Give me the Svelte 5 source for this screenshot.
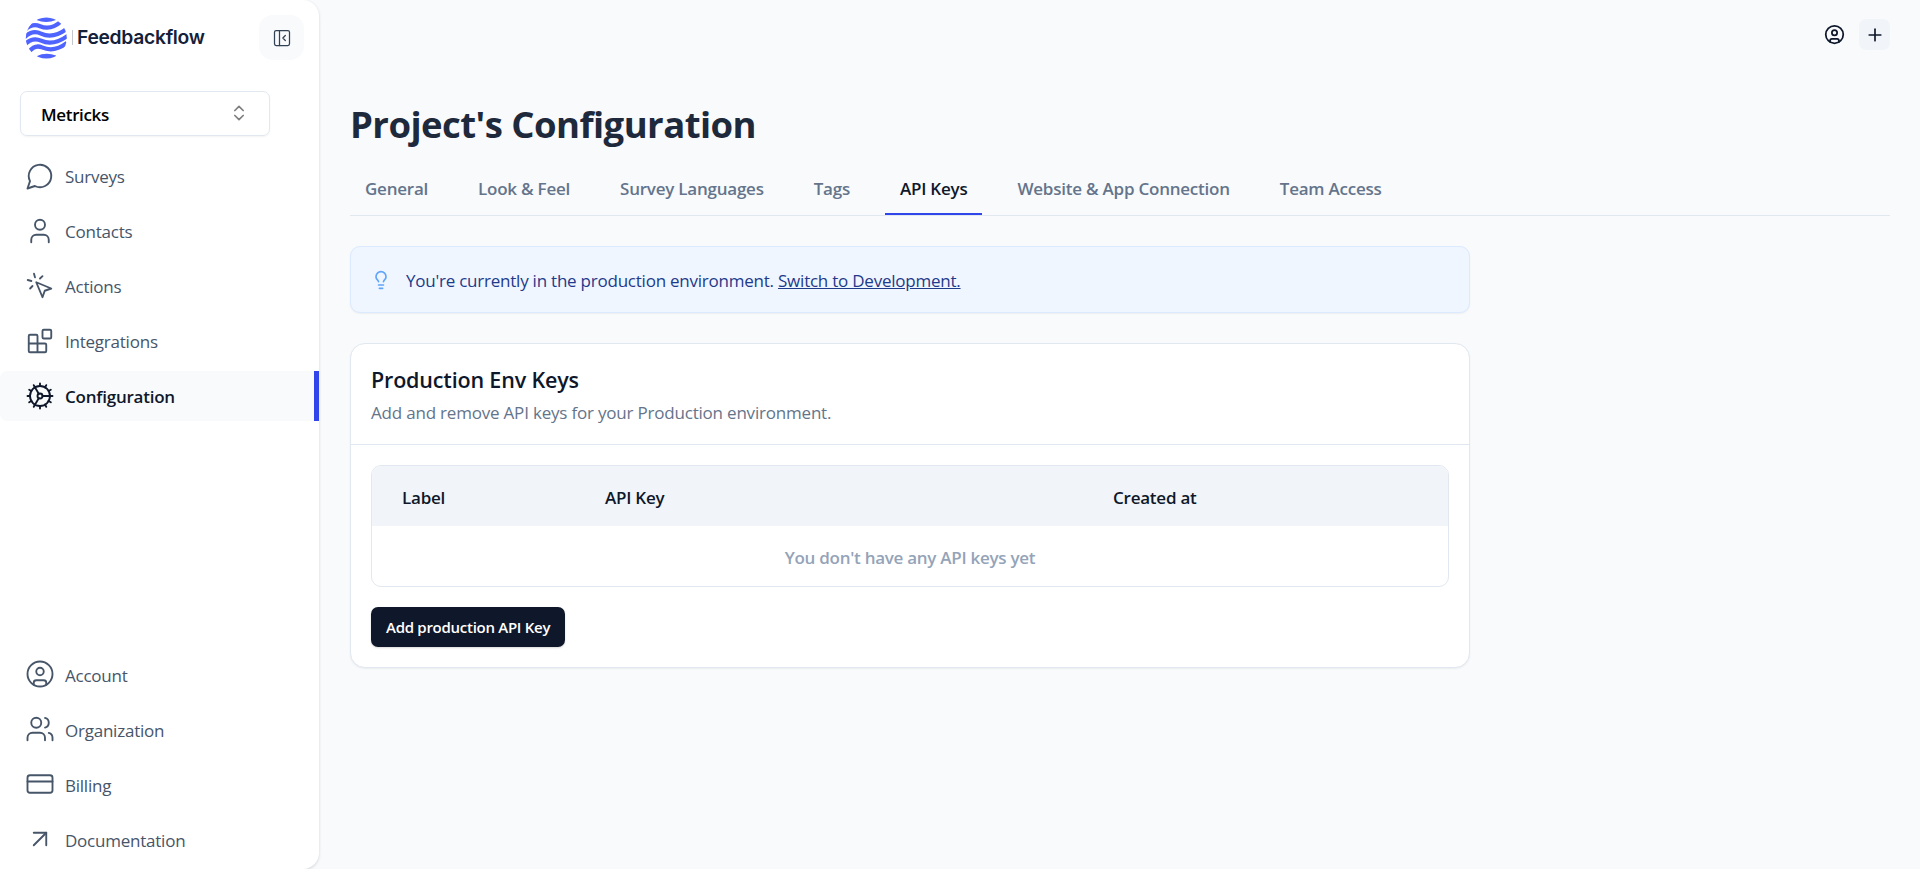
<script>
	const icons = {
		message: '<path d="M7.9 20A9 9 0 1 0 4 16.1L2 22Z"/>',
		user: '<path d="M19 21v-2a4 4 0 0 0-4-4H9a4 4 0 0 0-4 4v2"/><circle cx="12" cy="7" r="4"/>',
		click: '<path d="m9 9 5 12 1.8-5.2L21 14Z"/><path d="M7.2 2.2 8 5.1"/><path d="m5.1 8-2.9-.8"/><path d="M14 4.1 12 6"/><path d="m6 12-1.9 2"/>',
		blocks: '<rect width="7" height="7" x="14" y="3" rx="1"/><path d="M10 21V8a1 1 0 0 0-1-1H4a1 1 0 0 0-1 1v12a1 1 0 0 0 1 1h12a1 1 0 0 0 1-1v-5a1 1 0 0 0-1-1H3"/>',
		cog: '<circle cx="12" cy="12" r="8"/><circle cx="12" cy="12" r="2"/><path d="M12 2v2M12 22v-2m5 .66-1-1.73M11 10.27 7 3.34M20.66 17l-1.73-1M3.34 7l1.73 1M14 12h8M2 12h2M20.66 7l-1.73 1M3.34 17l1.73-1M17 3.34l-1 1.73M11 13.73l-4 6.93"/>',
		circleUser: '<circle cx="12" cy="12" r="10"/><circle cx="12" cy="10" r="3"/><path d="M7 20.662V19a2 2 0 0 1 2-2h6a2 2 0 0 1 2 2v1.662"/>',
		users: '<path d="M16 21v-2a4 4 0 0 0-4-4H6a4 4 0 0 0-4 4v2"/><circle cx="9" cy="7" r="4"/><path d="M22 21v-2a4 4 0 0 0-3-3.87"/><path d="M16 3.13a4 4 0 0 1 0 7.75"/>',
		card: '<rect width="20" height="14" x="2" y="5" rx="2"/><path d="M2 10h20"/>',
		arrow: '<path d="M7 7h10v10"/><path d="M7 17 17 7"/>',
		panel: '<rect width="18" height="18" x="3" y="3" rx="2"/><path d="M9 3v18"/><path d="m16 15-3-3 3-3"/>',
		sort: '<path d="m7 15 5 5 5-5"/><path d="m7 9 5-5 5 5"/>',
		plus: '<path d="M5 12h14"/><path d="M12 5v14"/>',
		bulb: '<path d="M15 14c.2-1 .7-1.7 1.5-2.5 1-.9 1.5-2.2 1.5-3.5A6 6 0 0 0 6 8c0 1 .2 2.2 1.5 3.5.7.7 1.3 1.5 1.5 2.5"/><path d="M9 18h6"/><path d="M10 22h4"/>'
	};

	const mainNav = [
		{ name: 'Surveys', icon: 'message' },
		{ name: 'Contacts', icon: 'user' },
		{ name: 'Actions', icon: 'click' },
		{ name: 'Integrations', icon: 'blocks' },
		{ name: 'Configuration', icon: 'cog' }
	];
	const bottomNav = [
		{ name: 'Account', icon: 'circleUser' },
		{ name: 'Organization', icon: 'users' },
		{ name: 'Billing', icon: 'card' },
		{ name: 'Documentation', icon: 'arrow' }
	];
	const tabs = ['General', 'Look & Feel', 'Survey Languages', 'Tags', 'API Keys', 'Website & App Connection', 'Team Access'];

	let activeNav = $state('Configuration');
	let activeTab = $state('API Keys');
</script>

{#snippet icon(name, size, stroke)}
	<svg width={size} height={size} viewBox="0 0 24 24" fill="none" stroke="currentColor" stroke-width={stroke} stroke-linecap="round" stroke-linejoin="round">
		{@html icons[name]}
	</svg>
{/snippet}

{#snippet navItem(item)}
	<button class="nav-item" class:active={activeNav === item.name} onclick={() => (activeNav = item.name)}>
		{@render icon(item.icon, 30, 1.5)}
		<span>{item.name}</span>
	</button>
{/snippet}

<div class="app">
	<aside class="sidebar">
		<div class="brand-row">
			<div class="brand">
				<svg width="42" height="42" viewBox="0 0 42 42">
					<clipPath id="disc"><circle cx="21.3" cy="21" r="20.5"/></clipPath>
					<g clip-path="url(#disc)" fill="none" stroke="#4f63ff" stroke-width="4.2">
						<path d="M11.5 3 Q21 7.2 31 3 L31 0 H11Z" fill="#4f63ff" stroke="none"/>
						<path d="M0 12.6 C5 8.2 10 7.2 15 9.2 S27 12.6 36 4.5"/>
						<path d="M-1 20.8 C5 14.6 10 13.8 16 16.6 S31 20 42 11.6"/>
						<path d="M-1 28.2 C5 21.8 10 20.8 16 23.6 S31 27.4 43 18.6"/>
						<path d="M4 34.8 C8 29.8 12 28.2 17 30.4 S31 34.4 42 26"/>
						<path d="M11.5 39.2 Q21 34.8 31 38.6 L31 42 H11Z" fill="#4f63ff" stroke="none"/>
					</g>
				</svg>
				<i></i>
				<span>Feedbackflow</span>
			</div>
			<button class="toggle" aria-label="Collapse">{@render icon('panel', 20, 1.5)}</button>
		</div>

		<button class="project">
			<span>Metricks</span>
			{@render icon('sort', 20, 2)}
		</button>

		<nav>
			{#each mainNav as item}
				{@render navItem(item)}
			{/each}
		</nav>
		<nav class="bottom">
			{#each bottomNav as item}
				{@render navItem(item)}
			{/each}
		</nav>
	</aside>

	<main>
		<div class="topbar">
			<button class="round" aria-label="Account">{@render icon('circleUser', 21, 2)}</button>
			<button class="add" aria-label="Add">{@render icon('plus', 20, 2)}</button>
		</div>

		<h1>Project's Configuration</h1>

		<div class="tabs">
			{#each tabs as tab}
				<button class:current={activeTab === tab} onclick={() => (activeTab = tab)}>{tab}</button>
			{/each}
		</div>

		<div class="notice">
			{@render icon('bulb', 20, 2)}
			<p>You're currently in the production environment. <a href="#dev">Switch to Development.</a></p>
		</div>

		<section class="card">
			<header>
				<h3>Production Env Keys</h3>
				<p>Add and remove API keys for your Production environment.</p>
			</header>
			<div class="card-body">
				<div class="table">
					<div class="thead">
						<span>Label</span>
						<span>API Key</span>
						<span>Created at</span>
					</div>
					<div class="empty">You don't have any API keys yet</div>
				</div>
				<button class="primary">Add production API Key</button>
			</div>
		</section>
	</main>
</div>

<style>
	:global(body) {
		background: #f8fafc;
	}
	.app {
		display: flex;
		height: 100vh;
		overflow: hidden;
		font-family: "Segoe UI", "Open Sans", sans-serif;
		font-stretch: 93%;
		font-size: 17px;
		line-height: 25px;
		letter-spacing: -0.23px;
		color: #0f172a;
	}
	button {
		font: inherit;
		letter-spacing: inherit;
		color: inherit;
		background: none;
		border: 0;
		padding: 0;
		margin: 0;
		cursor: pointer;
	}
	svg {
		display: block;
		flex: none;
	}
	h1, h3, p {
		margin: 0;
	}

	.sidebar {
		box-sizing: border-box;
		width: 319px;
		flex: none;
		display: flex;
		flex-direction: column;
		background: #fff;
		border-radius: 0 16px 16px 0;
		box-shadow: 0 1px 3px rgba(15, 23, 42, 0.17);
		padding: 15px 0 5px;
	}
	.brand-row {
		display: flex;
		justify-content: space-between;
		align-items: center;
		height: 45px;
		padding: 0 15px 0 25px;
	}
	.brand {
		display: flex;
		align-items: center;
	}
	.brand i {
		width: 1px;
		height: 15px;
		margin: 0 4px 0 5px;
		background: #c4c8ce;
	}
	.brand span {
		font-family: Inter, sans-serif;
		font-size: 19.3px;
		font-weight: 600;
		letter-spacing: -0.3px;
		color: #14213a;
	}
	.toggle {
		display: grid;
		place-items: center;
		width: 45px;
		height: 45px;
		border-radius: 14px;
		background: #f8fafc;
		color: #334155;
	}
	.project {
		box-sizing: border-box;
		display: flex;
		align-items: center;
		justify-content: space-between;
		width: 250px;
		height: 45px;
		margin: 31px 0 15px 20px;
		padding: 0 20px;
		border: 1px solid #e2e8f0;
		border-radius: 7px;
		box-shadow: 0 1px 2px rgba(0, 0, 0, 0.05);
		font-weight: 600;
		color: #000;
	}
	.project span {
		padding-top: 1px;
		letter-spacing: -0.35px;
	}
	.project svg {
		margin-bottom: 1px;
		opacity: 0.5;
	}
	nav {
		display: flex;
		flex-direction: column;
		gap: 5px;
	}
	.bottom {
		margin-top: auto;
	}
	.bottom span {
		padding-top: 2px;
	}
	.nav-item {
		display: flex;
		align-items: center;
		gap: 10px;
		height: 50px;
		padding-left: 25px;
		border-right: 5px solid transparent;
		border-radius: 7px 0 0 7px;
		color: #475569;
	}
	.nav-item.active {
		background: #f8fafc;
		border-right-color: #3046eb;
		color: #0f172a;
		font-weight: 600;
	}

	main {
		flex: 1;
		padding: 19px 30px 0 31px;
	}
	.topbar {
		display: flex;
		justify-content: flex-end;
		align-items: center;
		gap: 14px;
		height: 31px;
	}
	.round {
		padding-bottom: 1px;
	}
	.add {
		display: grid;
		place-items: center;
		width: 31px;
		height: 31px;
		border-radius: 7px;
		background: #f1f5f9;
	}
	h1 {
		margin: 49px 0 1px;
		font-size: 36.5px;
		line-height: 50px;
		font-weight: 700;
		letter-spacing: -0.55px;
		color: #1e293b;
	}
	.tabs {
		display: flex;
		gap: 20px;
		height: 65px;
		border-bottom: 1px solid #e2e8f0;
	}
	.tabs button {
		box-sizing: border-box;
		height: 65px;
		padding: 15px 15px 0;
		line-height: 48px;
		border-bottom: 2px solid transparent;
		font-weight: 600;
		letter-spacing: -0.23px;
		color: #64748b;
	}
	.tabs button.current {
		color: #0f172a;
		border-bottom-color: #3046eb;
	}
	.notice {
		box-sizing: border-box;
		display: flex;
		align-items: center;
		width: 1120px;
		height: 67px;
		margin-top: 30px;
		padding: 0 20px;
		gap: 15px;
		border: 1px solid #dbeafe;
		border-radius: 10px;
		background: #eff6ff;
		box-shadow: 0 1px 2px rgba(0, 0, 0, 0.05);
		color: #60a5fa;
	}
	.notice p {
		padding-top: 2px;
	}
	.notice p, .notice a {
		color: #1e3a8a;
	}
	.card {
		box-sizing: border-box;
		width: 1120px;
		height: 325px;
		margin-top: 30px;
		border: 1px solid #e2e8f0;
		border-radius: 15px;
		background: #fff;
		box-shadow: 0 1px 2px rgba(0, 0, 0, 0.06);
	}
	.card header {
		box-sizing: border-box;
		height: 101px;
		padding: 18px 20px 0;
		border-bottom: 1px solid #e2e8f0;
	}
	.card h3 {
		font-size: 21.5px;
		line-height: 36px;
		font-weight: 600;
		letter-spacing: -0.17px;
	}
	.card header p {
		line-height: 30px;
		letter-spacing: -0.2px;
		color: #64748b;
	}
	.card-body {
		padding: 20px;
	}
	.table {
		border: 1px solid #e2e8f0;
		border-radius: 10px;
		overflow: hidden;
	}
	.thead {
		display: grid;
		grid-template-columns: 203px 508px 1fr;
		padding-left: 30px;
		height: 60px;
		line-height: 63px;
		background: #f1f5f9;
		font-weight: 600;
	}
	.empty {
		height: 60px;
		line-height: 63px;
		text-align: center;
		font-weight: 600;
		letter-spacing: -0.27px;
		color: #94a3b8;
	}
	.primary {
		height: 40px;
		margin-top: 20px;
		padding: 0 15px;
		border-radius: 7px;
		background: #0f172a;
		box-shadow: 0 1px 2px rgba(0, 0, 0, 0.15);
		color: #fff;
		font-size: 15px;
		font-weight: 600;
		letter-spacing: -0.28px;
	}
</style>
